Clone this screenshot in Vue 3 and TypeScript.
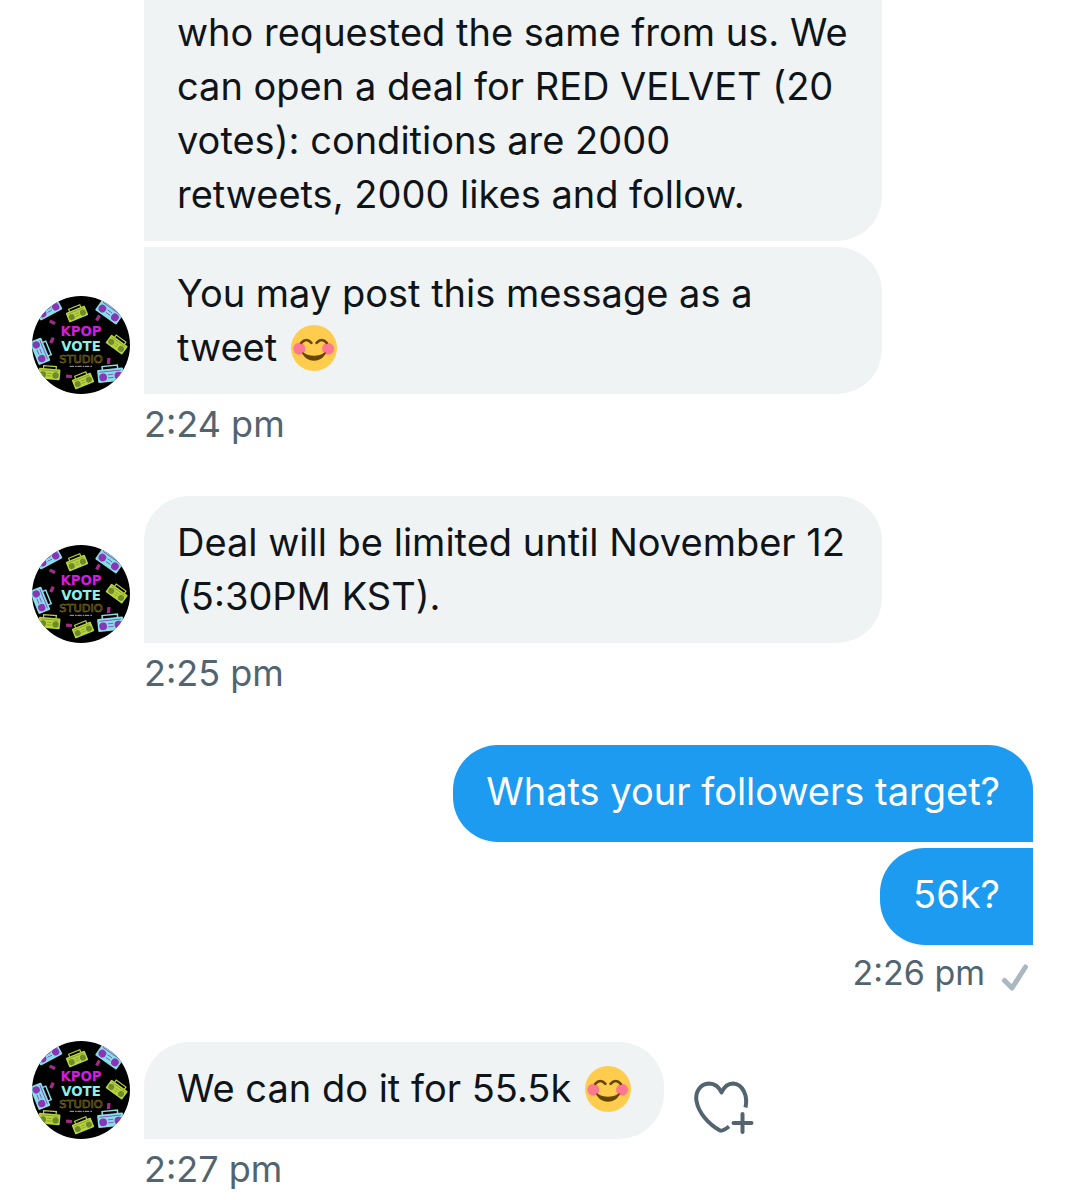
<script setup lang="ts">
type Part = { text?: string; emoji?: boolean }
type Line = Part[]
interface Bubble {
  lines: Line[]
  shape: string
  wide?: boolean
  react?: boolean
}
interface Group {
  sent: boolean
  time: string
  bubbles: Bubble[]
}

const groups: Group[] = [
  {
    sent: false,
    time: '2:24 pm',
    bubbles: [
      {
        wide: true,
        shape: 'continued',
        lines: [
          [{ text: 'who requested the same from us. We' }],
          [{ text: 'can open a deal for RED VELVET (20' }],
          [{ text: 'votes): conditions are 2000' }],
          [{ text: 'retweets, 2000 likes and follow.' }],
        ],
      },
      {
        wide: true,
        shape: 'last',
        lines: [[{ text: 'You may post this message as a' }], [{ text: 'tweet ' }, { emoji: true }]],
      },
    ],
  },
  {
    sent: false,
    time: '2:25 pm',
    bubbles: [
      {
        wide: true,
        shape: 'single',
        lines: [[{ text: 'Deal will be limited until November 12' }], [{ text: '(5:30PM KST).' }]],
      },
    ],
  },
  {
    sent: true,
    time: '2:26 pm',
    bubbles: [
      { shape: 'single', lines: [[{ text: 'Whats your followers target?' }]] },
      { shape: 'last', lines: [[{ text: '56k?' }]] },
    ],
  },
  {
    sent: false,
    time: '2:27 pm',
    bubbles: [
      { shape: 'single', react: true, lines: [[{ text: 'We can do it for 55.5k ' }, { emoji: true }]] },
    ],
  },
]

const cyan = '#86dfe8'
const lime = '#b9d43c'
const radios = [
  { x: 50, y: 40, r: -28, s: 1.1, c: cyan, d: '#8a35b5' },
  { x: 135, y: 54, r: -22, s: 0.9, c: lime, d: '#6f8a2c' },
  { x: 232, y: 48, r: 35, s: 1.15, c: cyan, d: '#8a35b5' },
  { x: 254, y: 146, r: 36, s: 0.9, c: lime, d: '#6f8a2c' },
  { x: 24, y: 166, r: 68, s: 1.1, c: cyan, d: '#8a35b5' },
  { x: 52, y: 234, r: 5, s: 0.95, c: lime, d: '#6f8a2c' },
  { x: 153, y: 255, r: -22, s: 0.9, c: lime, d: '#6f8a2c' },
  { x: 236, y: 238, r: -6, s: 1.15, c: cyan, d: '#8a35b5' },
]
const tapes = [
  { x: 61, y: 79, r: 25 },
  { x: 60, y: 133, r: -65 },
  { x: 198, y: 66, r: -60 },
  { x: 230, y: 195, r: -85 },
  { x: 111, y: 241, r: 5 },
]
</script>

<template>
  <main class="chat">
    <section v-for="g in groups" :key="g.time" class="group" :class="{ sent: g.sent }">
      <div v-for="(b, i) in g.bubbles" :key="i" class="row">
        <div v-if="!g.sent" class="avatar-slot">
          <svg v-if="i === g.bubbles.length - 1" class="avatar" viewBox="0 0 294 294" role="img" aria-label="Kpop Vote Studio">
            <rect width="294" height="294" fill="#000" />
            <g v-for="(r, n) in radios" :key="'r' + n" :transform="`translate(${r.x} ${r.y}) rotate(${r.r}) scale(${r.s})`">
              <path d="M-20-16v-9h40v9" fill="none" :stroke="r.c" stroke-width="4" />
              <rect x="-34" y="-17" width="68" height="34" rx="3" :fill="r.c" />
              <circle cx="-20" cy="3" r="10" :fill="r.d" />
              <circle cx="20" cy="3" r="10" :fill="r.d" />
              <path d="M-7-2H7M-7 6H7M-28-11H28" :stroke="r.d" stroke-width="2" />
            </g>
            <rect
              v-for="(t, n) in tapes"
              :key="'t' + n"
              x="-9"
              y="-5"
              width="18"
              height="10"
              rx="2"
              fill="#a02c86"
              :transform="`translate(${t.x} ${t.y}) rotate(${t.r})`"
            />
            <text class="logo kpop" x="147" y="119">KPOP</text>
            <text class="logo vote" x="147" y="165">VOTE</text>
            <text class="logo studio" x="147" y="200">STUDIO</text>
            <path d="M113 211h67" stroke="#aaa" stroke-width="3" stroke-dasharray="13 3 5 2" />
          </svg>
        </div>
        <div class="track">
          <div class="bubble" :class="[b.shape, { wide: b.wide }]">
            <div v-for="(line, l) in b.lines" :key="l" class="line">
              <template v-for="(p, k) in line" :key="k">
                <svg v-if="p.emoji" class="emoji" viewBox="0 0 36 36" role="img" aria-label="Smiling face">
                  <circle cx="18" cy="18" r="18" fill="#ffcc4d" />
                  <circle cx="6.500" cy="18.500" r="4.700" fill="#ff7892" />
                  <circle cx="29" cy="18.500" r="4.700" fill="#ff7892" />
                  <path d="M8 14q4-4.600 8 0M20 14q4-4.600 8 0" fill="none" stroke="#664500" stroke-width="2" stroke-linecap="round" />
                  <path d="M8.600 22c0-.6.7-.8 1.100-.4C14.400 25 21.600 25 26.300 21.600c.5-.4 1.100-.2 1.100.4C25.500 26 22 28 18 28S10.500 26 8.600 22z" fill="#664500" />
                </svg>
                <template v-else>{{ p.text }}</template>
              </template>
            </div>
          </div>
          <button v-if="b.react" class="react" type="button" aria-label="Add reaction">
            <svg viewBox="0 0 62 56" fill="none" stroke="#536471" stroke-width="4" stroke-linecap="round" stroke-linejoin="round">
              <path stroke-linecap="butt" d="M52.500 27.500C55 16 50 4 40 3.500C34 3.500 31 7 28.500 12.500C26 7 22 3.500 16 3.500C7 4 2 12 3.500 21C5.500 33 16 44.500 27 50.500Q29.500 51.500 36 46.500" />
              <path d="M49.500 34v18M40.500 43h18" />
            </svg>
          </button>
        </div>
      </div>
      <div class="meta">
        <time>{{ g.time }}</time>
        <svg v-if="g.sent" class="check" viewBox="0 0 28 30" role="img" aria-label="Sent">
          <path d="M3.500 17.500L11 25L24.500 4" fill="none" stroke="#aab8c2" stroke-width="5" stroke-linecap="round" stroke-linejoin="round" />
        </svg>
      </div>
    </section>
  </main>
</template>

<style>
body {
  background: #fff;
}
</style>

<style scoped>
.chat {
  padding: 0 33px 0 32px;
  font-family: Inter, "Liberation Sans", sans-serif;
  color: #0f1419;
}
.group {
  display: flex;
  flex-direction: column;
  gap: 6px;
}
.row {
  display: flex;
  align-items: flex-end;
  gap: 14px;
}
.avatar-slot {
  flex: none;
  width: 98px;
}
.avatar {
  display: block;
  width: 98px;
  height: 98px;
  border-radius: 50%;
}
.logo {
  font-family: "DejaVu Sans", sans-serif;
  text-anchor: middle;
}
.kpop {
  font-size: 40px;
  font-weight: 700;
  fill: #d41be0;
}
.vote {
  font-size: 40px;
  font-weight: 700;
  fill: #8cf0e8;
}
.studio {
  font-size: 34px;
  fill: none;
  stroke: #7d6c1c;
  stroke-width: 2px;
}
.track {
  flex: 1;
  display: flex;
  align-items: center;
  gap: 28px;
}
.sent .track {
  justify-content: flex-end;
}
.bubble {
  box-sizing: border-box;
  min-height: 97px;
  padding: 19px 33px 20px;
  background: #eff3f4;
  border-radius: 45px 45px 45px 0;
  font-size: 38px;
  line-height: 54px;
  white-space: pre;
}
.bubble.wide {
  width: 83%;
}
.bubble.last {
  border-top-left-radius: 0;
}
.bubble.continued {
  padding-top: 5px;
  border-radius: 0 0 45px 0;
}
.sent .bubble {
  background: #1d9bf0;
  color: #fff;
  border-radius: 45px 45px 0 45px;
}
.sent .bubble.last {
  border-top-right-radius: 0;
}
.line {
  height: 54px;
}
.emoji {
  width: 46px;
  height: 46px;
  margin-left: 3px;
  vertical-align: -10px;
}
.react {
  margin-top: 34px;
  padding: 0;
  border: 0;
  background: none;
}
.react svg {
  display: block;
  width: 64px;
  height: 56px;
}
.meta {
  display: flex;
  align-items: center;
  height: 48px;
  margin-left: 112px;
  padding-bottom: 48px;
  font-size: 36px;
  line-height: 48px;
  color: #536471;
}
.sent .meta {
  justify-content: flex-end;
  gap: 16px;
  height: 44px;
  padding-bottom: 46px;
  margin-right: 4px;
  font-size: 34px;
  line-height: 44px;
}
.check {
  width: 28px;
  height: 30px;
  margin-top: 10px;
}
</style>
